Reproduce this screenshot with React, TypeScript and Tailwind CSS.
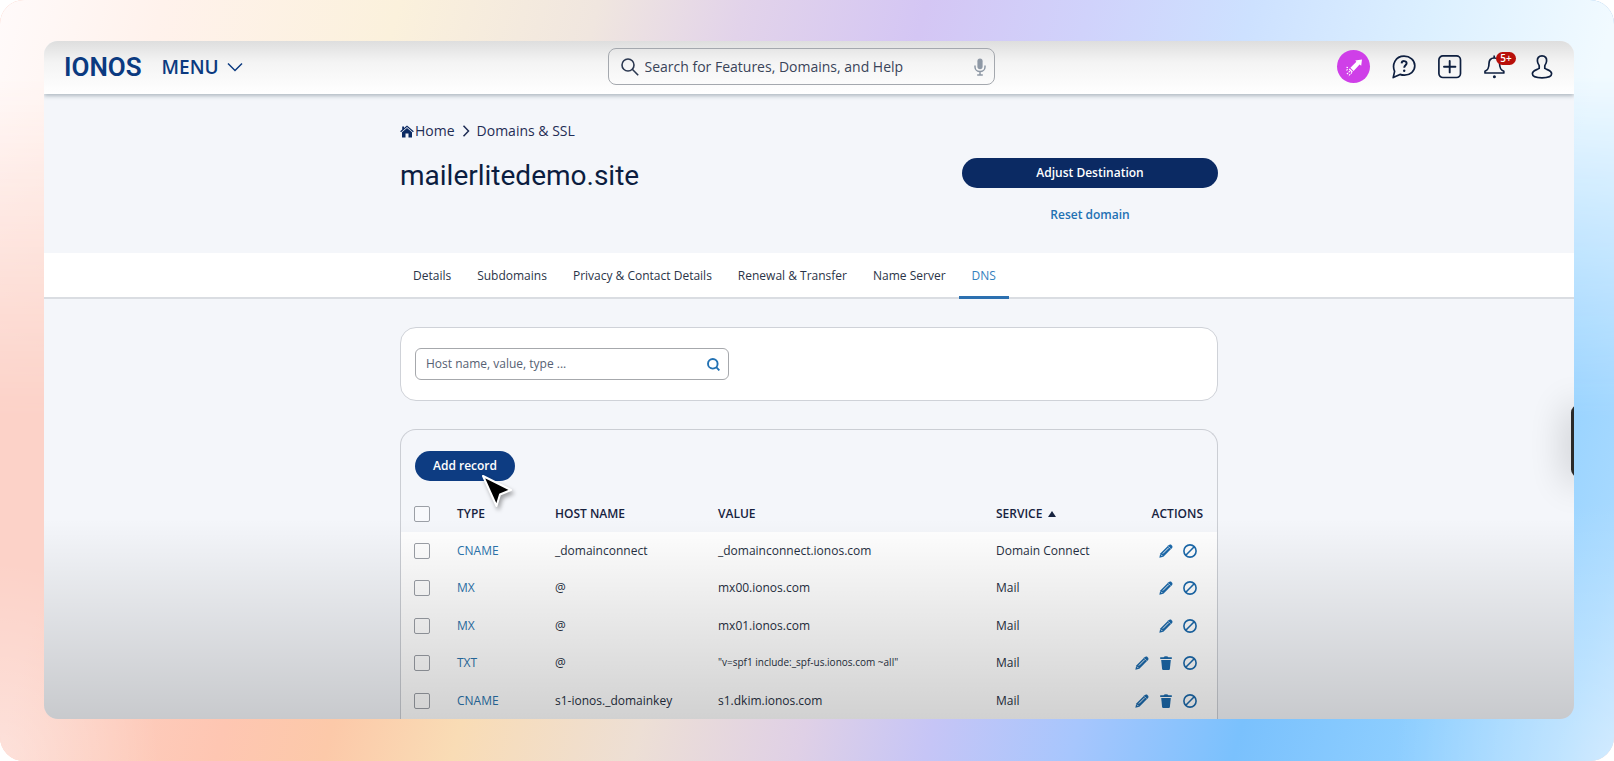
import type { ReactNode } from "react";

type RecordRow = {
  id: number;
  type: string;
  host: string;
  value: string;
  service: string;
  removable?: boolean;
  small?: boolean;
};

const tabs = ["Details", "Subdomains", "Privacy & Contact Details", "Renewal & Transfer", "Name Server", "DNS"];

const records: RecordRow[] = [
  { id: 1, type: "CNAME", host: "_domainconnect", value: "_domainconnect.ionos.com", service: "Domain Connect" },
  { id: 2, type: "MX", host: "@", value: "mx00.ionos.com", service: "Mail" },
  { id: 3, type: "MX", host: "@", value: "mx01.ionos.com", service: "Mail" },
  { id: 4, type: "TXT", host: "@", value: '"v=spf1 include:_spf-us.ionos.com ~all"', service: "Mail", removable: true, small: true },
  { id: 5, type: "CNAME", host: "s1-ionos._domainkey", value: "s1.dkim.ionos.com", service: "Mail", removable: true },
];

function PencilIcon() {
  return (
    <svg viewBox="0 0 14 14" className="size-3.5" aria-hidden="true">
      <path d="M0.3 13.7 L1.3 9.6 L9.6 1.2 Q10.8 0 12 0.6 L13.3 1.9 Q14 3 12.8 4.3 L4.4 12.7 Z" fill="currentColor" />
      <path d="M3.8 9.6 L9.8 3.6" stroke="#eef3f8" strokeWidth="1" />
      <path d="M9.4 2.4 L11.6 4.6" stroke="#eef3f8" strokeWidth="0.6" />
      <path d="M1.9 10.6 L3.4 12.1" stroke="#eef3f8" strokeWidth="0.9" />
    </svg>
  );
}

function TrashIcon() {
  return (
    <svg viewBox="0 0 14 14" className="size-3.5" fill="currentColor" aria-hidden="true">
      <path d="M1.2 1.2 H4.6 Q5 0.2 7 0.2 Q9 0.2 9.4 1.2 H12.8 V3 H1.2 Z" />
      <path d="M2.2 3.9 H11.8 L10.9 13 Q10.8 14 9.8 14 H4.2 Q3.2 14 3.1 13 Z" />
    </svg>
  );
}

function BanIcon() {
  return (
    <svg viewBox="0 0 14 14" className="size-3.5" fill="none" stroke="currentColor" strokeWidth="1.6" aria-hidden="true">
      <circle cx="7" cy="7" r="6.1" />
      <path d="M11.2 2.8 L2.8 11.2" />
    </svg>
  );
}

function IconButton({ label, children }: { label: string; children: ReactNode }) {
  return (
    <button type="button" aria-label={label} className="flex size-6 items-center justify-center">
      {children}
    </button>
  );
}

function Checkbox({ label }: { label: string }) {
  return (
    <input
      type="checkbox"
      aria-label={label}
      className="block size-4 appearance-none rounded-xs border border-[#9b9fa6] bg-white/40 checked:bg-[#1269b0]"
    />
  );
}

function TopBar() {
  return (
    <header className="relative z-10 grid h-[53px] shrink-0 grid-cols-[1fr_403px_1fr] items-center bg-linear-to-b from-[#dedede] via-[#f4f4f4] via-40% to-white px-5 pb-0.5 shadow-[0_2px_4px_rgba(90,110,125,0.45)]">
      <div className="flex items-center gap-5 text-[#0b3a80]">
        <a href="#" className="font-[Roboto,sans-serif] text-[26px] leading-9 font-semibold">
          IONOS
        </a>
        <button type="button" className="flex items-center gap-2 text-[19px] leading-6 font-semibold">
          MENU
          <svg viewBox="0 0 16 10" className="h-2.5 w-4" fill="none" stroke="currentColor" strokeWidth="1.5" aria-hidden="true">
            <path d="M1 1.5 L8 8.5 L15 1.5" />
          </svg>
        </button>
      </div>

      <label className="mr-4 flex h-[37px] items-center gap-1.5 rounded-lg border border-[#a4a8ae] pr-2 pl-3">
        <svg viewBox="0 0 18 18" className="size-[18px] shrink-0" fill="none" stroke="#2b3850" strokeWidth="1.6" aria-hidden="true">
          <circle cx="7" cy="7" r="6" />
          <path d="M11.3 11.3 L17.2 17.2" />
        </svg>
        <input
          type="text"
          aria-label="Search"
          placeholder="Search for Features, Domains, and Help"
          className="min-w-0 flex-1 bg-transparent text-sm outline-none placeholder:text-[#3a4459]"
        />
        <svg viewBox="0 0 12 18" className="h-[18px] w-3 shrink-0" fill="none" stroke="#8e98a5" strokeWidth="1.5" aria-hidden="true">
          <rect x="3.4" y="0.6" width="5.2" height="10.6" rx="2.6" fill="#8e98a5" stroke="none" />
          <path d="M1 7.5 V9 A5 4.6 0 0 0 11 9 V7.5 M6 13.6 V16.5 M3.2 17 H8.8" />
        </svg>
      </label>

      <div className="flex items-center justify-end gap-[22px] text-[#0e1f3f]">
        <button type="button" aria-label="What's new" className="flex size-[33px] items-center justify-center rounded-full bg-[#cf3fe8]">
          <svg viewBox="0 0 20 20" className="size-5" fill="#fff" aria-hidden="true">
            <path d="M18 2.6 L17.2 8.8 L15.6 7.6 L9.6 14 L6.4 10.8 L12.4 4.8 L11.2 3.4 Z" />
            <path d="M5.6 11.4 L8.8 14.6 L7.8 15.4 L4.8 12.4 Z" />
            <path d="M8 15.4 L4.4 19 M4 10.6 L2 10.2 M3.8 12.6 L1.6 13.4 M5.8 14.2 L2.8 17.2" stroke="#fff" strokeWidth="1.1" strokeDasharray="1.6 0.9" />
          </svg>
        </button>
        <IconButton label="Help">
          <svg viewBox="0 0 24 24" className="size-6" fill="none" stroke="currentColor" strokeWidth="1.7" strokeLinejoin="round" aria-hidden="true">
            <path d="M1.2 22.6 L2.6 16.4 C-0.4 9.4 3.6 1.2 12 1.2 C18 1.2 22.8 5.2 22.8 10.8 C22.8 16.4 18 20.2 12.6 20.2 C10.6 20.2 9.2 19.9 8 19.4 Z" />
            <path d="M9.6 8.4 C9.8 5.2 14.8 5.4 14.6 8.4 C14.5 10.2 12.2 10.4 12.2 12.8" strokeWidth="1.9" />
            <circle cx="12.2" cy="15.8" r="1.2" fill="currentColor" stroke="none" />
          </svg>
        </IconButton>
        <IconButton label="Add">
          <svg viewBox="0 0 24 24" className="size-6" fill="none" stroke="currentColor" strokeWidth="1.7" aria-hidden="true">
            <rect x="0.9" y="0.9" width="21.6" height="21.6" rx="4" />
            <path d="M11.7 6 V17.4 M6 11.7 H17.4" strokeLinecap="round" strokeWidth="1.9" />
          </svg>
        </IconButton>
        <div className="relative">
          <IconButton label="Notifications">
            <svg viewBox="0 0 24 24" className="size-6" fill="none" stroke="currentColor" strokeWidth="1.7" strokeLinejoin="round" aria-hidden="true">
              <path d="M10.2 0.4 V3" />
              <path d="M10.2 3 C6.4 3 5 5.6 5 8.4 C5 13.2 4 14.8 1 16.2 V18 H19.8 V16.2 C16.6 14.8 15.6 13.2 15.6 8.4 C15.6 5.6 14 3 10.2 3" />
              <circle cx="10.4" cy="21.8" r="1.5" fill="currentColor" stroke="none" />
            </svg>
          </IconButton>
          <span className="absolute -top-[3px] left-3 flex h-[13px] w-5 items-center justify-center rounded-full bg-[#b80f0a] text-[10px] leading-none font-semibold text-white">
            5+
          </span>
        </div>
        <IconButton label="Account">
          <svg viewBox="0 0 24 24" className="size-6" fill="none" stroke="currentColor" strokeWidth="1.7" strokeLinejoin="round" aria-hidden="true">
            <path d="M12 0.9 C8.6 0.9 7.2 3.2 7.4 6 C7.5 8 8.4 9.4 9.2 10.6 V13.4 C7 15 2.4 15.2 2.4 18.8 C2.4 21.2 6 22.8 12 22.8 C18 22.8 21.6 21.2 21.6 18.8 C21.6 15.2 17 15 14.8 13.4 V10.6 C15.6 9.4 16.5 8 16.6 6 C16.8 3.2 15.4 0.9 12 0.9 Z" />
          </svg>
        </IconButton>
      </div>
    </header>
  );
}

function DomainHeader() {
  return (
    <section className="h-[159px] shrink-0">
      <div className="mx-auto flex w-full max-w-[818px] justify-between">
        <div className="pt-[27px]">
          <nav aria-label="Breadcrumb" className="flex items-center text-sm leading-5 text-[#1f2d55]">
            <a href="#" className="flex items-center gap-px">
              <svg viewBox="0 0 14 13" className="h-[13px] w-3.5" fill="#0b2a63" aria-hidden="true">
                <path d="M7 0.4 L13.8 6.2 L13 7.2 L7 2.1 L1 7.2 L0.2 6.2 L2.2 4.5 V1.4 H4 V3 Z" />
                <path d="M7 3 L12 7.2 V12.4 H8.5 V8.6 H5.5 V12.4 H2 V7.2 Z" />
              </svg>
              Home
            </a>
            <svg viewBox="0 0 8 12" className="mx-[7px] h-3 w-2" fill="none" stroke="currentColor" strokeWidth="1.5" aria-hidden="true">
              <path d="M1.5 0.8 L6.5 6 L1.5 11.2" />
            </svg>
            <a href="#">Domains &amp; SSL</a>
          </nav>
          <h1 className="mt-[15px] font-[Roboto,sans-serif] text-[28px] leading-10 text-[#0b1d40]">mailerlitedemo.site</h1>
        </div>
        <div className="flex w-64 flex-col items-center pt-16">
          <button type="button" className="h-[30px] w-full rounded-full bg-[#0b2a63] text-xs font-semibold text-white">
            Adjust Destination
          </button>
          <a href="#" className="mt-[17px] text-xs leading-5 font-semibold text-[#2271b3]">
            Reset domain
          </a>
        </div>
      </div>
    </section>
  );
}

function Tabs() {
  return (
    <nav aria-label="Domain sections" className="shrink-0 border-b-2 border-[#dadde2] bg-white">
      <div className="mx-auto flex w-full max-w-[818px]">
        {tabs.map((tab) => (
          <a
            key={tab}
            href="#"
            aria-current={tab === "DNS" ? "page" : undefined}
            className={
              tab === "DNS"
                ? "-mb-0.5 border-b-3 border-[#2c70b0] px-[13px] pt-[13px] pb-2.5 text-xs leading-5 text-[#3580bd]"
                : "px-[13px] pt-[13px] pb-[11px] text-xs leading-5 text-[#2a3448]"
            }
          >
            {tab}
          </a>
        ))}
      </div>
    </nav>
  );
}

function SearchCard() {
  return (
    <section className="rounded-2xl border border-[#cfd2d8] bg-white px-3.5 py-5">
      <label className="flex h-8 w-[314px] items-center rounded-md border border-[#a6a8ac] bg-white pr-2 pl-2.5">
        <input
          type="text"
          aria-label="Filter records"
          placeholder="Host name, value, type ..."
          className="min-w-0 flex-1 text-xs outline-none placeholder:text-[#566173]"
        />
        <svg viewBox="0 0 13 13" className="size-[13px]" fill="none" stroke="#2271b3" strokeWidth="1.9" aria-hidden="true">
          <circle cx="5.8" cy="5.8" r="4.8" />
          <path d="M9.2 9.2 L12.4 12.4" />
        </svg>
      </label>
    </section>
  );
}

function RecordsTable() {
  return (
    <table className="w-full table-fixed text-left text-xs text-[#262f42]">
      <colgroup>
        <col className="w-14" />
        <col className="w-[98px]" />
        <col className="w-[163px]" />
        <col className="w-[278px]" />
        <col className="w-[120px]" />
        <col />
      </colgroup>
      <thead className="text-[#17233f]">
        <tr className="h-[37px]">
          <th className="pl-[13px]">
            <Checkbox label="Select all records" />
          </th>
          <th className="font-semibold">TYPE</th>
          <th className="font-semibold">HOST NAME</th>
          <th className="font-semibold">VALUE</th>
          <th className="font-semibold">
            <button type="button" className="flex items-center gap-1.5">
              SERVICE
              <svg viewBox="0 0 8 6" className="h-1.5 w-2" fill="currentColor" aria-hidden="true">
                <path d="M4 0 L8 6 H0 Z" />
              </svg>
            </button>
          </th>
          <th className="pr-3.5 text-right font-semibold">ACTIONS</th>
        </tr>
      </thead>
      <tbody className="bg-white">
        {records.map((record) => (
          <tr key={record.id} className="h-[37px] even:h-[38px]">
            <td className="pl-[13px]">
              <Checkbox label={`Select ${record.type} ${record.value}`} />
            </td>
            <td>
              <a href="#" className="text-[#2b73ac]">
                {record.type}
              </a>
            </td>
            <td>{record.host}</td>
            <td className={record.small ? "text-[10px]" : undefined}>{record.value}</td>
            <td>{record.service}</td>
            <td className="pr-[15px]">
              <div className="flex justify-end text-[#1b69ab]">
                <IconButton label="Edit record">
                  <PencilIcon />
                </IconButton>
                {record.removable && (
                  <IconButton label="Delete record">
                    <TrashIcon />
                  </IconButton>
                )}
                <IconButton label="Disable record">
                  <BanIcon />
                </IconButton>
              </div>
            </td>
          </tr>
        ))}
      </tbody>
    </table>
  );
}

function Cursor() {
  return (
    <svg viewBox="0 0 34 38" className="pointer-events-none absolute top-[23px] left-[66px] h-[38px] w-[34px] drop-shadow-[2px_3px_2px_rgba(0,0,0,0.35)]" aria-hidden="true">
      <path d="M2 2 L30 16 L19 20.5 L15.5 32 Z" fill="#000" stroke="#fff" strokeWidth="2" strokeLinejoin="round" />
    </svg>
  );
}

export default function App() {
  return (
    <div className="h-screen bg-white font-['Open_Sans','Noto_Sans',sans-serif]">
      <div className="relative isolate flex h-full overflow-hidden rounded-3xl bg-[#fcd2c8] pt-[41px] pr-10 pb-[42px] pl-11">
        {/* pastel backdrop: bottom sweep, then the top sweep fading out downwards */}
        <div className="absolute inset-0 -z-10 bg-[linear-gradient(105deg,#fcd2c8_11%,#fec6b2_23%,#fcc9a9_29%,#f9dcb5_36%,#eddfd5_46%,#dfd0e6_55%,#c6c5f6_62%,#a7c6fd_70%,#7ac1fd_79%,#8fcfff_89%,#a9daff_97%,#b9e0ff_100%)]" />
        <div className="absolute inset-0 -z-10 bg-[linear-gradient(105deg,#fffafa_0%,#fff2ec_9%,#fbf1dc_22%,#f0e6df_33%,#e2d3ea_41%,#d4c6f4_51%,#d0d2fb_60%,#cde1ff_69%,#dcf0ff_79%,#f1faff_89%)] [mask-image:linear-gradient(to_bottom,#000_10%,transparent_55%)]" />
        <div className="absolute inset-0 -z-10 bg-[radial-gradient(ellipse_160px_200px_at_0%_100%,rgba(255,255,255,0.35),transparent),radial-gradient(ellipse_220px_260px_at_100%_100%,rgba(255,255,255,0.35),transparent)]" />

        <main className="relative flex min-w-0 flex-1 flex-col overflow-hidden rounded-[14px] bg-[#f4f6fa]">
          <TopBar />
          <DomainHeader />
          <Tabs />
          <div className="mx-auto w-full max-w-[818px] pt-7">
            <SearchCard />
            <section className="mt-7 rounded-t-2xl border border-b-0 border-[#cbced4] pt-[21px]">
              <div className="relative mb-3.5 ml-3.5 w-fit">
                <button type="button" className="h-[30px] rounded-full bg-[#0d3c82] px-[18px] text-xs font-semibold text-white">
                  Add record
                </button>
                <Cursor />
              </div>
              <RecordsTable />
            </section>
          </div>

          {/* bottom shade */}
          <div className="pointer-events-none absolute inset-x-0 bottom-0 h-[200px] bg-linear-to-b from-transparent to-black/18" />
          <div className="absolute top-[364px] -right-3 h-[72px] w-[15px] rounded-lg bg-[#2a2a2a] shadow-[0_4px_36px_4px_rgba(0,0,0,0.2)]" />
        </main>
      </div>
    </div>
  );
}
